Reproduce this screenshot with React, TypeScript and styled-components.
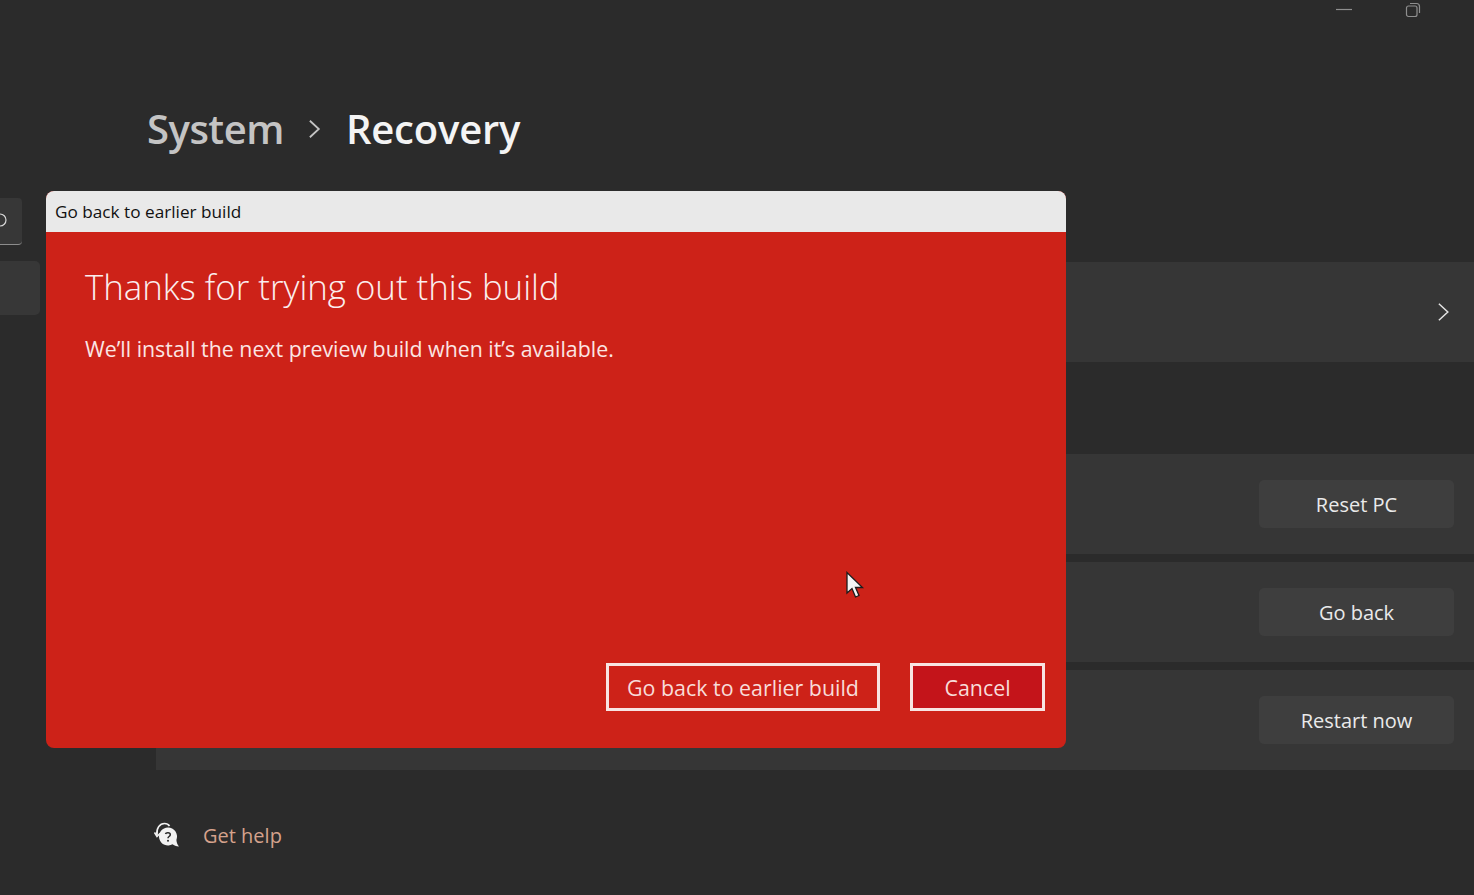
import { FC } from 'react';
import styled, { createGlobalStyle } from 'styled-components';

const GlobalStyle = createGlobalStyle`
  html, body {
    margin: 0;
    padding: 0;
    background: #2b2b2b;
  }
  body {
    font-family: "Open Sans", "Noto Sans", "Liberation Sans", sans-serif;
  }
`;

const Page = styled.div`
  position: relative;
  display: grid;
  grid-template-columns: 40px 1fr;
  width: 1474px;
  height: 895px;
  overflow: hidden;
  background: #2b2b2b;
  color: #fff;
`;

const Sidebar = styled.aside`
  display: flex;
  flex-direction: column;
  padding-top: 198px;
  gap: 16px;
`;

const SearchBox = styled.div`
  display: flex;
  align-items: center;
  box-sizing: border-box;
  width: 22px;
  height: 47px;
  background: #373737;
  border-bottom: 1px solid #8c8c8c;
  border-radius: 0 4px 4px 0;
  overflow: hidden;
`;

const NavItem = styled.div`
  height: 54px;
  background: #373737;
  border-radius: 0 5px 5px 0;
`;

const Main = styled.main`
  display: flex;
  flex-direction: column;
`;

const WindowControls = styled.div`
  display: flex;
  justify-content: flex-end;
  align-items: flex-start;
  gap: 52px;
  height: 20px;
  padding: 2px 53px 0 0;
  color: #8f8f8f;
`;

const Breadcrumb = styled.h1`
  display: flex;
  align-items: center;
  height: 60px;
  margin: 77px 0 0 107px;
  font-size: 40px;
  font-weight: 600;
  line-height: 60px;
`;

const Crumb = styled.span<{ $muted?: boolean }>`
  color: ${(p) => (p.$muted ? '#c4c4c4' : '#f4f4f4')};
  letter-spacing: ${(p) => (p.$muted ? '-0.5px' : '-0.2px')};
`;

const CrumbSeparator = styled.span`
  display: flex;
  margin: 0 21px 0 19px;
  color: #c4c4c4;
`;

const Panels = styled.section`
  display: flex;
  flex-direction: column;
  margin: 103px 0 0 116px;
`;

const Panel = styled.div<{ $gap?: number }>`
  display: flex;
  align-items: center;
  justify-content: flex-end;
  box-sizing: border-box;
  height: 100px;
  margin-top: ${(p) => p.$gap ?? 0}px;
  padding-right: 20px;
  background: #363636;
`;

const PanelButton = styled.div`
  display: flex;
  align-items: center;
  justify-content: center;
  width: 195px;
  height: 48px;
  background: #3e3e3e;
  border-radius: 5px;
  color: #eaeaea;
  font-size: 20px;
`;

const ChevronSlot = styled.div`
  display: flex;
  color: #e2e2e2;
`;

const HelpLink = styled.div`
  display: flex;
  align-items: center;
  gap: 24px;
  height: 30px;
  margin: 50px 0 0 114px;
  color: #d5a28c;
  font-size: 20px;
`;

const Dialog = styled.div`
  position: absolute;
  left: 46px;
  top: 191px;
  display: flex;
  flex-direction: column;
  width: 1020px;
  height: 557px;
  border-radius: 8px;
  overflow: hidden;
  background: #cd2218;
`;

const DialogTitleBar = styled.div`
  display: flex;
  align-items: center;
  flex: none;
  height: 41px;
  padding-left: 9px;
  background: #e9e9e9;
  color: #111;
  font-size: 17.2px;
`;

const DialogBody = styled.div`
  display: flex;
  flex: 1;
  flex-direction: column;
  padding: 32px 21px 37px 39px;
`;

const DialogHeading = styled.h2`
  margin: 0;
  font-size: 34.800px;
  font-weight: 300;
  line-height: 46px;
  color: #fbeeee;
`;

const DialogText = styled.p`
  flex: 1;
  margin: 24px 0 0;
  font-size: 21.350px;
  font-weight: 400;
  line-height: 30px;
  color: #fbe6e4;
`;

const DialogActions = styled.div`
  display: flex;
  justify-content: flex-end;
  gap: 30px;
`;

const DialogButton = styled.div<{ $primary?: boolean }>`
  display: flex;
  align-items: center;
  justify-content: center;
  box-sizing: border-box;
  width: ${(p) => (p.$primary ? '135px' : '274px')};
  height: 48px;
  padding-top: 1px;
  border: 3px solid #f8e4e2;
  background: ${(p) => (p.$primary ? '#c4141a' : 'transparent')};
  color: #f8dcd9;
  font-size: 21.400px;
`;

const Cursor = styled.svg`
  position: absolute;
  left: 845px;
  top: 571px;
`;

const Chevron: FC<{ size: number; width?: number }> = ({ size, width = 1.5 }) => (
  <svg width={size} height={size} viewBox="0 0 16 16" fill="none" stroke="currentColor" strokeWidth={width}>
    <path d="M5 2l6.500 6L5 14" />
  </svg>
);

const HelpIcon = () => (
  <svg width="25" height="26" viewBox="0 0 25 26">
    <path d="M3 13C2 6 6 1.500 10.500 1.500c2 0 4 1 5 2.500" fill="none" stroke="#f0f0f0" strokeWidth="1.700" />
    <path d="M0.500 10.500L3 14.500l3.200-3.200" fill="none" stroke="#f0f0f0" strokeWidth="1.600" />
    <path d="M14 5.500a9 9 0 0 1 8.500 12c-.3 1.500.5 4.500 2.500 7-3-.2-5-1-6.500-2.200A9 9 0 1 1 14 5.500z" fill="#f2f2f2" />
    <path d="M11.500 12c.3-1.700 4.800-2 4.800.7 0 1.800-2.300 1.800-2.300 3.500" fill="none" stroke="#2b2b2b" strokeWidth="1.500" />
    <circle cx="14" cy="18.800" r="1" fill="#2b2b2b" />
  </svg>
);

const rows = [
  { label: 'Reset PC', gap: 92 },
  { label: 'Go back', gap: 8 },
  { label: 'Restart now', gap: 8 },
];

const App = () => (
  <Page>
    <GlobalStyle />
    <Sidebar>
      <SearchBox>
        <svg width="22" height="47" viewBox="0 0 22 47" fill="none" stroke="#d8d8d8" strokeWidth="1.200">
          <circle cx="0" cy="22" r="6" />
        </svg>
      </SearchBox>
      <NavItem />
    </Sidebar>
    <Main>
      <WindowControls>
        <svg width="17" height="14" viewBox="0 0 17 14" stroke="currentColor" strokeWidth="1.200">
          <path d="M0 7.500h16" />
        </svg>
        <svg width="16" height="16" viewBox="0 0 16 16" fill="none" stroke="currentColor" strokeWidth="1.200">
          <rect x="1.500" y="4" width="10.500" height="10.500" rx="2" />
          <path d="M5 1.500h6.500a3 3 0 0 1 3 3V11" />
        </svg>
      </WindowControls>
      <Breadcrumb>
        <Crumb $muted>System</Crumb>
        <CrumbSeparator>
          <Chevron size={22} width={1.300} />
        </CrumbSeparator>
        <Crumb>Recovery</Crumb>
      </Breadcrumb>
      <Panels>
        <Panel>
          <ChevronSlot>
            <Chevron size={22} width={1.100} />
          </ChevronSlot>
        </Panel>
        {rows.map((row) => (
          <Panel key={row.label} $gap={row.gap}>
            <PanelButton>{row.label}</PanelButton>
          </Panel>
        ))}
      </Panels>
      <HelpLink>
        <HelpIcon />
        <span>Get help</span>
      </HelpLink>
    </Main>
    <Dialog>
      <DialogTitleBar>Go back to earlier build</DialogTitleBar>
      <DialogBody>
        <DialogHeading>Thanks for trying out this build</DialogHeading>
        <DialogText>We’ll install the next preview build when it’s available.</DialogText>
        <DialogActions>
          <DialogButton>Go back to earlier build</DialogButton>
          <DialogButton $primary>Cancel</DialogButton>
        </DialogActions>
      </DialogBody>
    </Dialog>
    <Cursor width="20" height="30" viewBox="0 0 20 30">
      <path d="M2 1.500V22l5-4.500 3.500 8.500 3.500-1.500-3.500-8H17.500z" fill="#f4f4f4" stroke="#1c1c1c" strokeWidth="1.300" />
    </Cursor>
  </Page>
);

export default App;
